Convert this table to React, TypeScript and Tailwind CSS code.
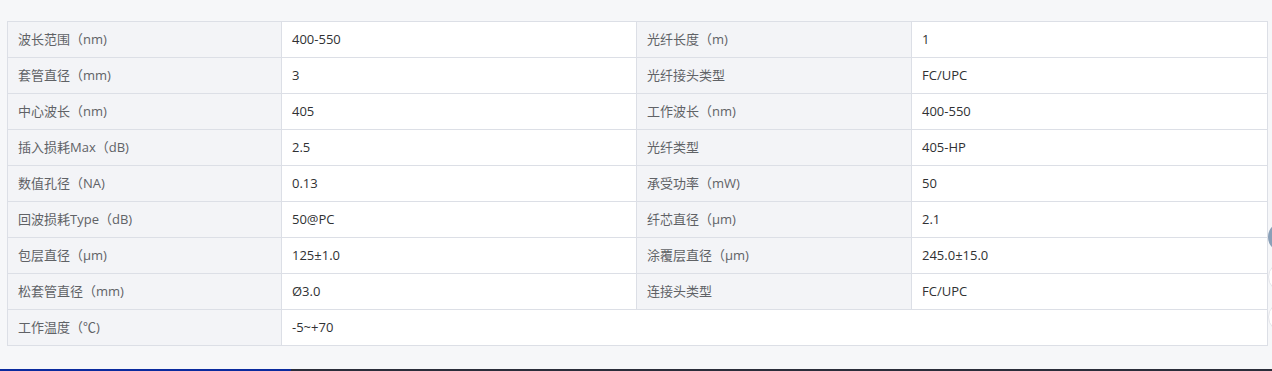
import React from 'react';

const rows: [string, string, string?, string?][] = [
  ['波长范围（nm)', '400-550', '光纤长度（m)', '1'],
  ['套管直径（mm)', '3', '光纤接头类型', 'FC/UPC'],
  ['中心波长（nm)', '405', '工作波长（nm)', '400-550'],
  ['插入损耗Max（dB)', '2.5', '光纤类型', '405-HP'],
  ['数值孔径（NA)', '0.13', '承受功率（mW)', '50'],
  ['回波损耗Type（dB)', '50@PC', '纤芯直径（μm)', '2.1'],
  ['包层直径（μm)', '125±1.0', '涂覆层直径（μm)', '245.0±15.0'],
  ['松套管直径（mm)', 'Ø3.0', '连接头类型', 'FC/UPC'],
  ['工作温度（℃)', '-5~+70'],
];

const labelCls = 'h-9 border border-[#dcdfe6] bg-[#f3f4f7] px-[10px] text-[#606266]';
const valueCls = 'h-9 border border-[#dcdfe6] bg-white px-[10px] text-[#303133]';

export default function App() {
  return (
    <div className="relative h-[371px] w-[1272px] overflow-hidden bg-[#f6f7f9] font-['Open_Sans','Noto_Sans_CJK_SC',sans-serif] text-[13px]">
      <div className="pl-[7px] pt-[21px]">
        <table className="w-[1260px] table-fixed border-collapse">
          <colgroup>
            <col className="w-[274px]" />
            <col className="w-[355px]" />
            <col className="w-[275px]" />
            <col className="w-[356px]" />
          </colgroup>
          <tbody>
            {rows.map(([l1, v1, l2, v2], i) => (
              <tr key={i}>
                <td className={labelCls}>{l1}</td>
                {l2 === undefined ? (
                  <td className={valueCls} colSpan={3}>{v1}</td>
                ) : (
                  <>
                    <td className={valueCls}>{v1}</td>
                    <td className={labelCls}>{l2}</td>
                    <td className={valueCls}>{v2}</td>
                  </>
                )}
              </tr>
            ))}
          </tbody>
        </table>
      </div>

      {/* floating side widgets, cut off by the window edge */}
      <div className="absolute right-[-26px] top-[222px] flex flex-col gap-[10px]">
        <div className="h-[30px] w-[30px] rounded-full bg-[#8aa0b8]" />
        <div className="h-[30px] w-[30px] rounded-full border border-[#e3e5ea] bg-white" />
        <div className="h-[30px] w-[30px] rounded-full border border-[#e3e5ea] bg-white" />
      </div>

      <div className="absolute bottom-0 left-0 flex h-[2px] w-full">
        <div className="w-[291px] bg-[#0a2a9e]" />
        <div className="flex-1 bg-[#2a2d3a]" />
      </div>
    </div>
  );
}
